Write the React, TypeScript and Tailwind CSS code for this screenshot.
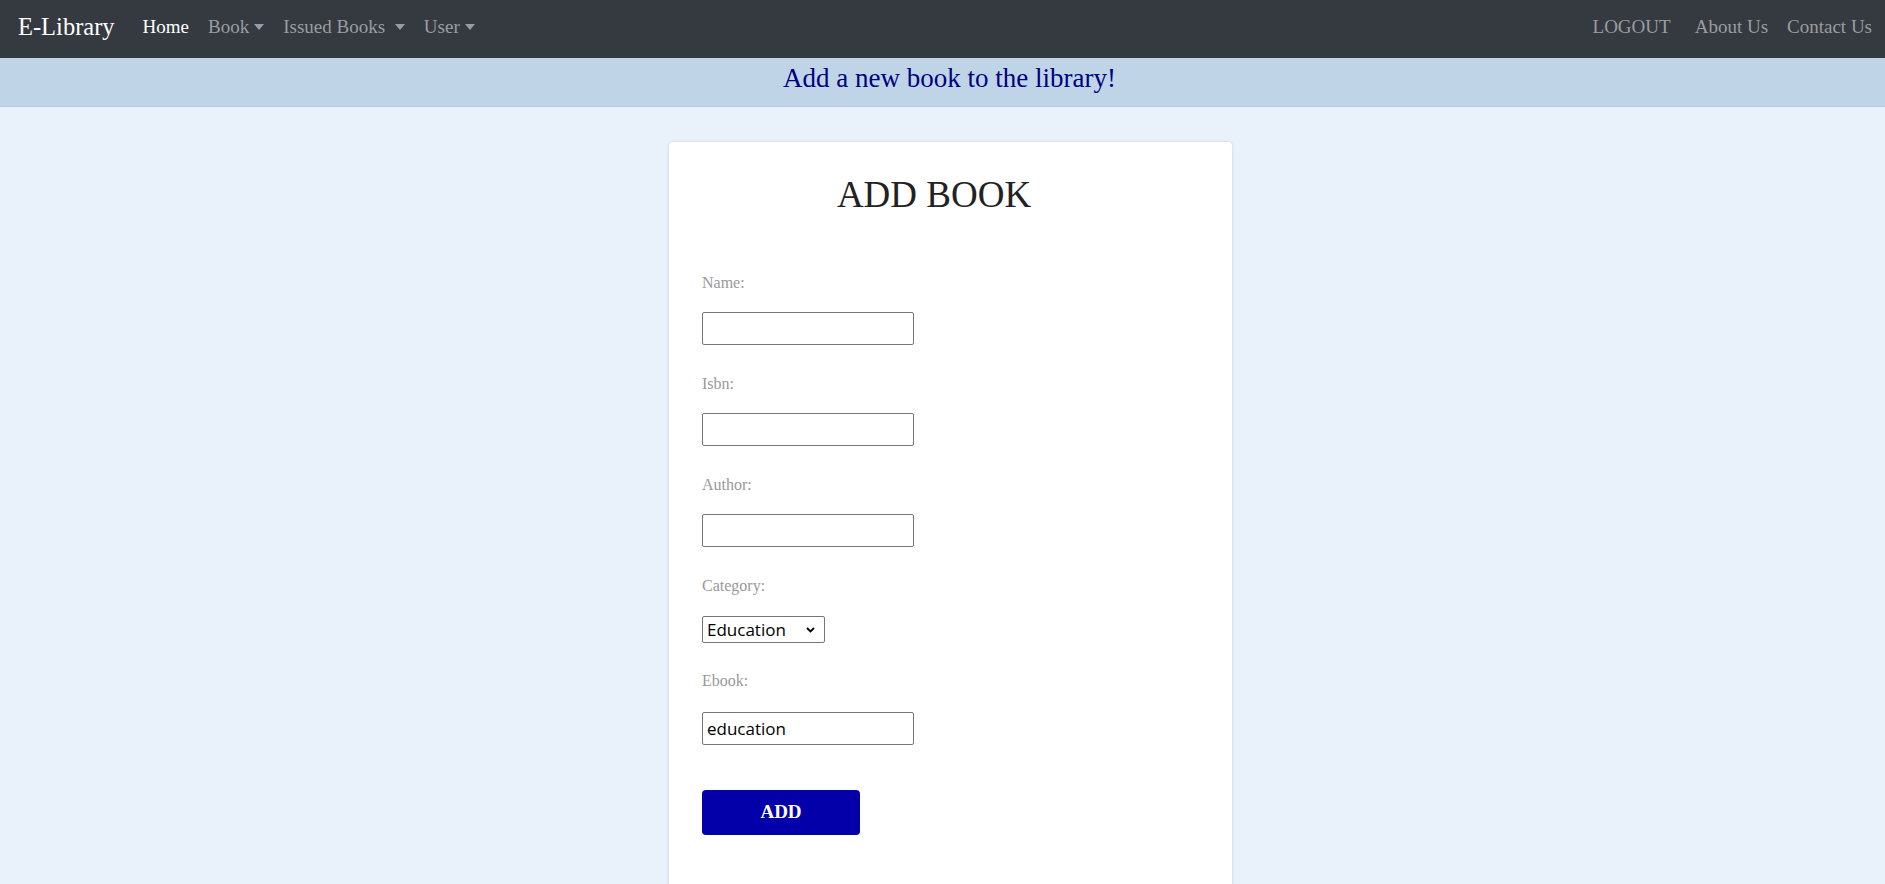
import React, { useState } from 'react';

const serif = { fontFamily: '"Liberation Serif", "Times New Roman", serif' };
const sans = { fontFamily: '"Open Sans", "Noto Sans", sans-serif' };

const Caret = () => (
  <span className="ml-[5px] inline-block h-0 w-0 border-x-[5.5px] border-t-[6px] border-x-transparent border-t-[#9a9da0] align-[4px]" />
);

const NavLink = ({ label, active, caret, spaced }: { label: string; active?: boolean; caret?: boolean; spaced?: boolean }) => (
  <a href="#" className={`flex items-center whitespace-pre ${active ? 'text-white' : 'text-[#9a9da0]'}`}>
    {label}
    {spaced && ' '}
    {caret && <Caret />}
  </a>
);

const Field = ({ label, value }: { label: string; value?: string }) => {
  const [v, setV] = useState(value ?? '');
  return (
    <div className="flex flex-col items-start">
      <label className="mb-[17px] text-[16px] leading-[24px] text-[#999]" style={serif}>
        {label}
      </label>
      <input
        value={v}
        onChange={(e) => setV(e.target.value)}
        className="mb-[27px] h-[33px] w-[212px] rounded-[2px] border border-[#767676] bg-white px-[4px] text-[16px] text-black outline-none"
        style={sans}
      />
    </div>
  );
};

export default function App() {
  const [category, setCategory] = useState('Education');

  return (
    <div className="min-h-screen overflow-hidden bg-[#e9f1fa]" style={serif}>
      {/* Navbar */}
      <nav className="flex h-[58px] items-center justify-between bg-[#343a40] pl-[18px] pr-[13px] pb-1 text-[19px]">
        <div className="flex items-center">
          <a href="#" className="mr-[28px] text-[24.5px] text-white">E-Library</a>
          <div className="flex items-center gap-[19px]">
            <NavLink label="Home" active />
            <NavLink label="Book" caret />
            <NavLink label="Issued Books" caret spaced />
            <NavLink label="User" caret />
          </div>
        </div>
        <div className="flex items-center">
          <NavLink label="LOGOUT" />
          <span className="w-[24px]" />
          <NavLink label="About Us" />
          <span className="w-[19px]" />
          <NavLink label="Contact Us" />
        </div>
      </nav>

      {/* Banner */}
      <div className="flex h-[49px] items-center justify-center border-b border-[#b3cadc] bg-[#bfd5e7] pb-[8px] pl-[14px]">
        <h3 className="text-[27px] leading-none text-[#000080]">Add a new book to the library!</h3>
      </div>

      {/* Card */}
      <div className="flex justify-center pt-[35px] pl-[16px]">
        <div className="w-[563px] rounded-[4px] bg-white pl-[33px] pt-[32px] pb-[90px] shadow-[0_0_3px_rgba(0,0,0,0.15)]">
          <h1 className="mb-[55px] pr-[66px] text-center text-[37px] leading-[42px] text-[#222]">ADD BOOK</h1>

          <form onSubmit={(e) => e.preventDefault()}>
            <Field label="Name:" />
            <Field label="Isbn:" />
            <Field label="Author:" />

            <div className="flex flex-col items-start">
              <label className="mb-[18px] text-[16px] leading-[24px] text-[#999]">Category:</label>
              <div className="relative mb-[26px]">
                <select
                  value={category}
                  onChange={(e) => setCategory(e.target.value)}
                  className="h-[27px] w-[123px] appearance-none rounded-[2px] border border-[#767676] bg-white pl-[4px] text-[17px] leading-[25px] text-black outline-none"
                  style={sans}
                >
                  <option>Education</option>
                  <option>Fiction</option>
                  <option>Science</option>
                  <option>History</option>
                </select>
                <svg className="pointer-events-none absolute right-[10px] top-[11px]" width="9" height="6" viewBox="0 0 9 6">
                  <path d="M1 1l3.5 3.5L8 1" fill="none" stroke="#000" strokeWidth="1.8" />
                </svg>
              </div>
            </div>

            <div className="flex flex-col items-start">
              <label className="mb-[19px] text-[16px] leading-[24px] text-[#999]">Ebook:</label>
              <EbookInput />
            </div>

            <button
              type="submit"
              className="mt-[45px] h-[45px] w-[158px] rounded-[4px] bg-[#0300a9] text-[19px] font-bold text-white"
              style={serif}
            >
              ADD
            </button>
          </form>
        </div>
      </div>
    </div>
  );
}

function EbookInput() {
  const [v, setV] = useState('education');
  return (
    <input
      value={v}
      onChange={(e) => setV(e.target.value)}
      className="h-[33px] w-[212px] rounded-[2px] border border-[#767676] bg-white px-[4px] text-[17px] text-black outline-none"
      style={sans}
    />
  );
}
